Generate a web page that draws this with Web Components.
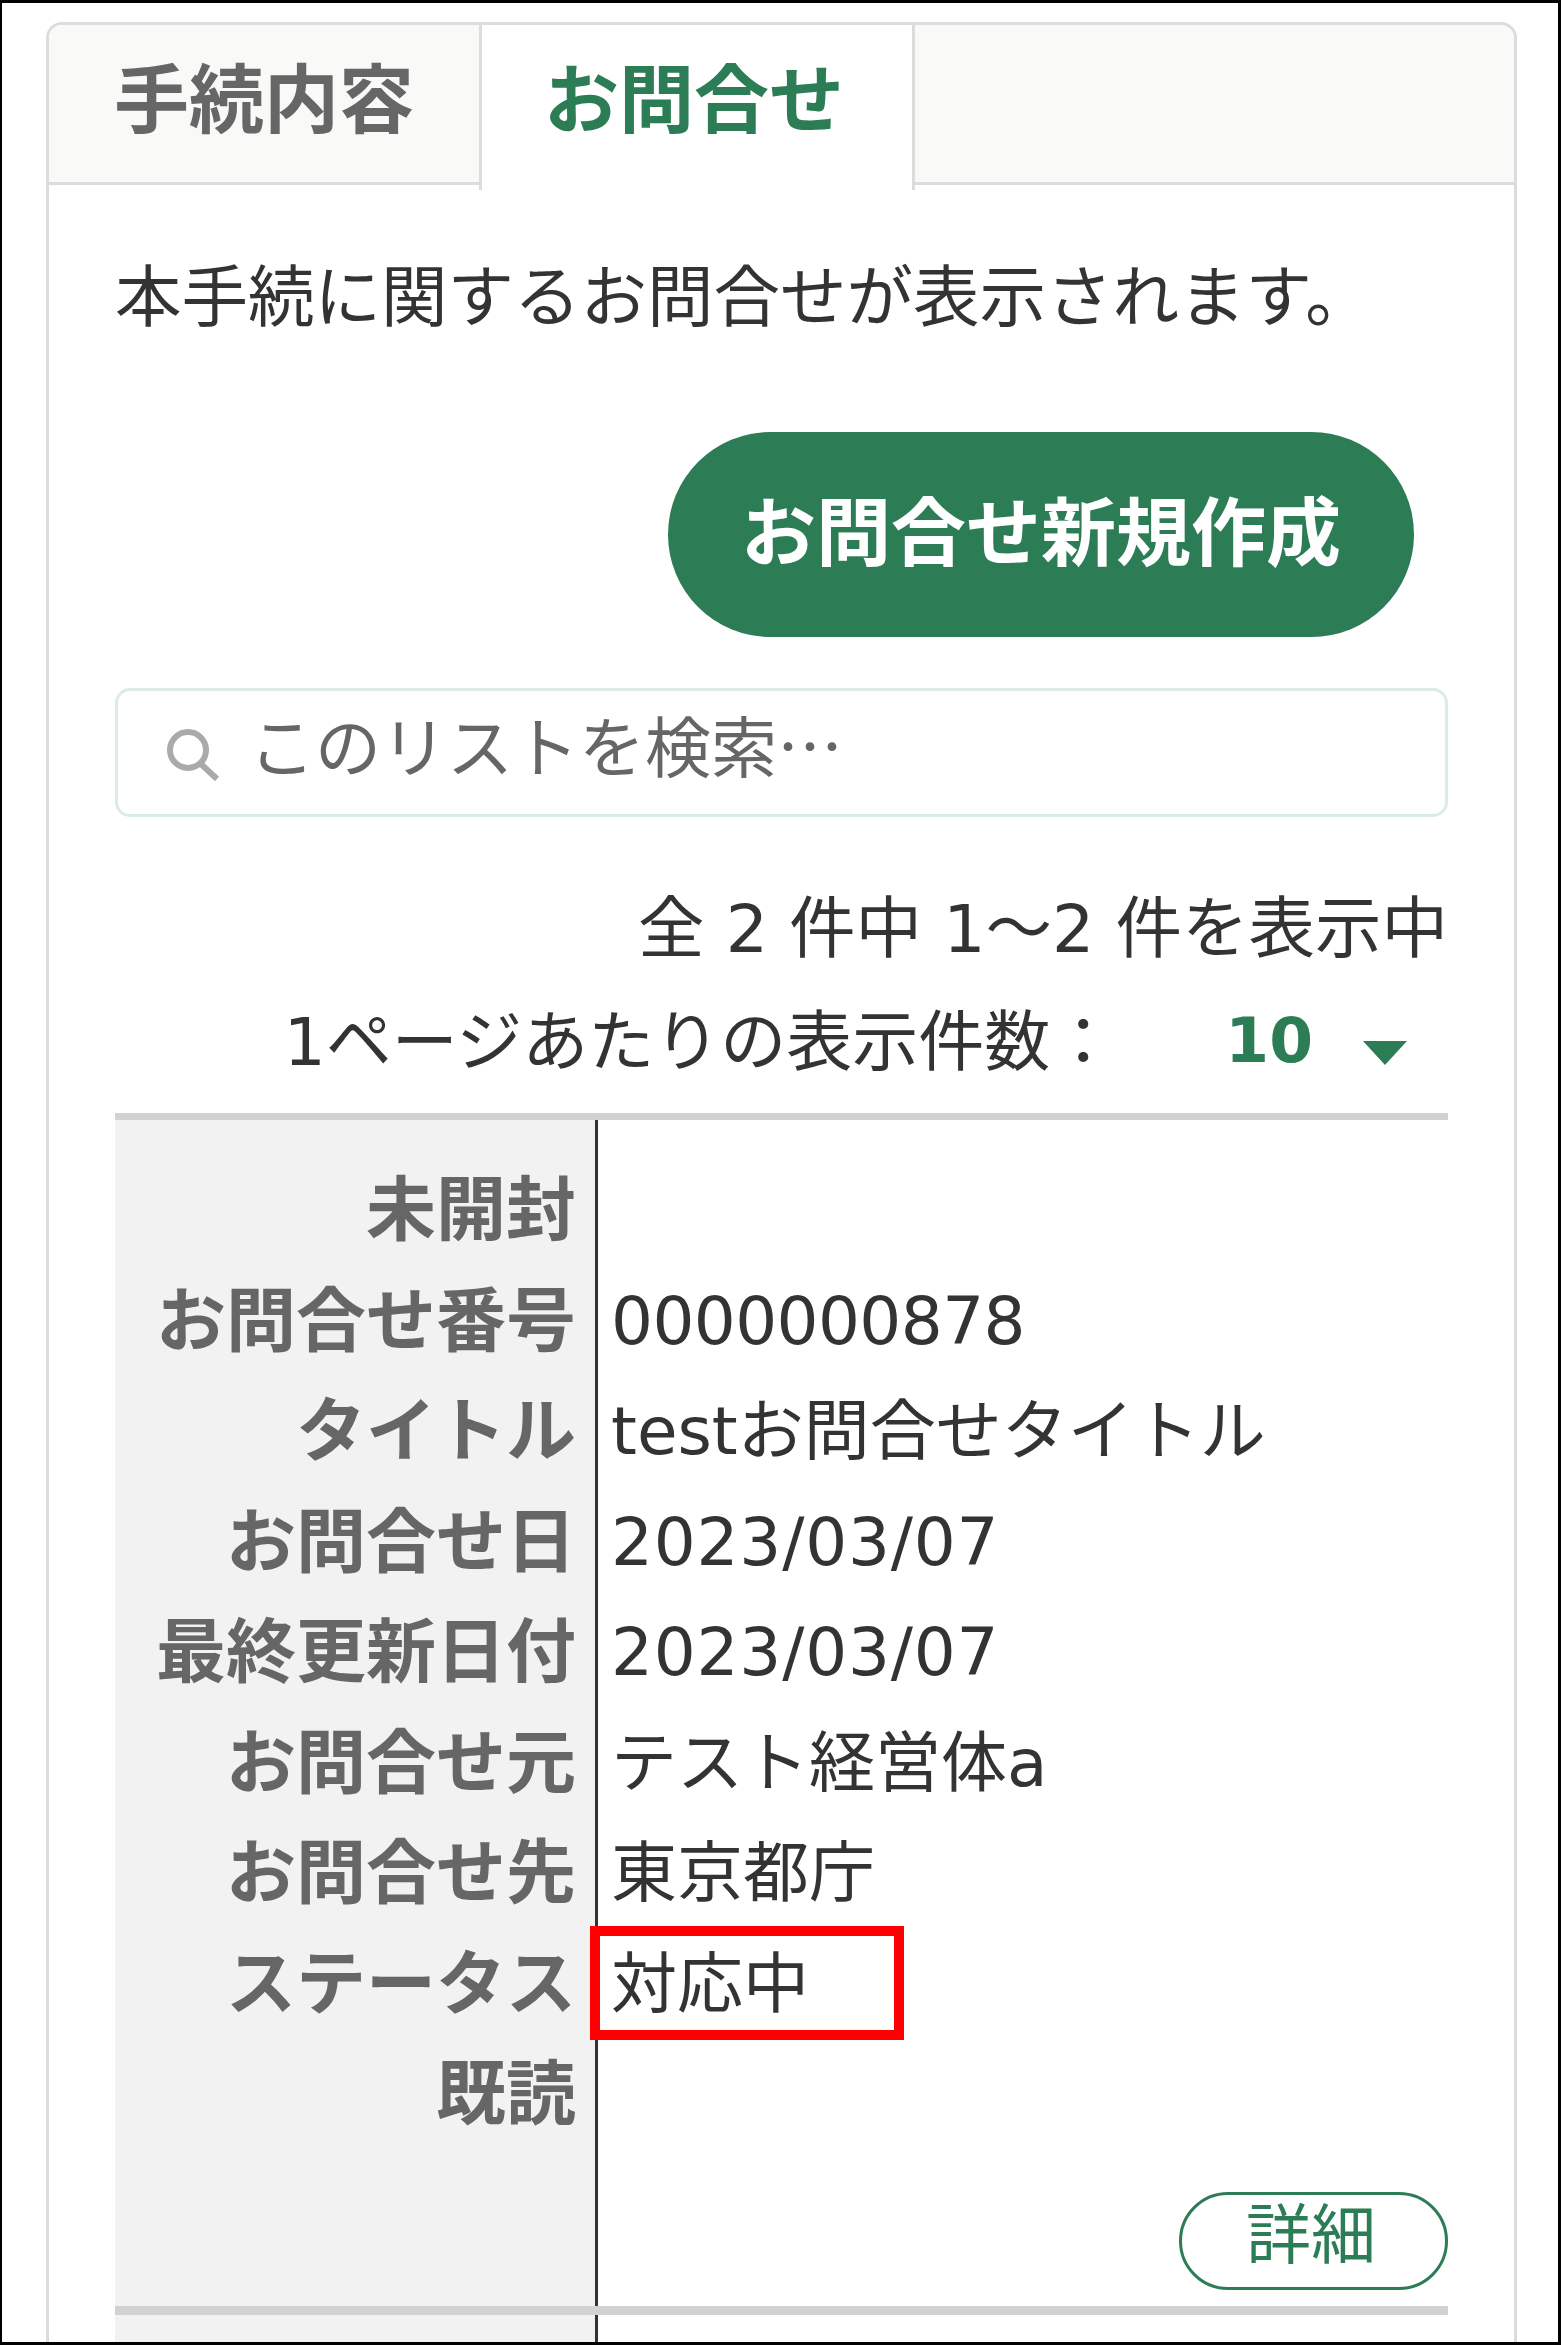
<!DOCTYPE html>
<html lang="ja">
<head>
<meta charset="utf-8">
<title>お問合せ</title>
<style>
  html, body { margin: 0; padding: 0; background: #fff; }
  body { font-family: "DejaVu Sans", "Noto Sans CJK JP", sans-serif; color: #333; }
  .num { letter-spacing: -0.6px; }
  .date { letter-spacing: 0.8px; }
</style>
</head>
<body>
<inquiry-frame>
  <tab-card>
    <tab-item slot="tabs">手続内容</tab-item>
    <tab-item slot="tabs" active>お問合せ</tab-item>

    <p-text>本手続に関するお問合せが表示されます。</p-text>
    <primary-button>お問合せ新規作成</primary-button>
    <search-box>このリストを検索…</search-box>
    <list-pager total="全 2 件中 1～2 件を表示中" label="1ページあたりの表示件数：" size="10"></list-pager>

    <inquiry-record>
      <record-field label="未開封"></record-field>
      <record-field label="お問合せ番号"><span class="num">0000000878</span></record-field>
      <record-field label="タイトル">testお問合せタイトル</record-field>
      <record-field label="お問合せ日"><span class="date">2023/03/07</span></record-field>
      <record-field label="最終更新日付"><span class="date">2023/03/07</span></record-field>
      <record-field label="お問合せ元">テスト経営体a</record-field>
      <record-field label="お問合せ先">東京都庁</record-field>
      <record-field label="ステータス" marked>対応中</record-field>
      <record-field label="既読"></record-field>
      <outline-button slot="actions">詳細</outline-button>
    </inquiry-record>
    <inquiry-record last></inquiry-record>
  </tab-card>
</inquiry-frame>

<script>
const GREEN = '#2c7d55'
const LINE = '#dcdcdc'
const CJK = '"Noto Sans CJK JP", sans-serif'

class InquiryFrame extends HTMLElement {
  constructor() {
    super()
    this.attachShadow({ mode: 'open' }).innerHTML = `
      <style>
        :host {
          display: block;
          box-sizing: border-box;
          width: 1561px;
          height: 2345px;
          padding: 19px 0 0 44px;
          border: solid #000;
          border-width: 3px 3px 3px 2px;
          overflow: hidden;
          background: #fff;
        }
      </style>
      <slot></slot>`
  }
}

class TabCard extends HTMLElement {
  constructor() {
    super()
    this.attachShadow({ mode: 'open' }).innerHTML = `
      <style>
        :host {
          display: block;
          width: 1471px;
          box-sizing: border-box;
          border: 3px solid ${LINE};
          border-bottom: 0;
          border-radius: 16px 16px 0 0;
        }
        .tabs {
          display: flex;
          height: 157px;
          background: #f9f9f7;
          border-bottom: 3px solid ${LINE};
          border-radius: 13px 13px 0 0;
        }
        .panel { padding: 57px 66px 0; }
      </style>
      <div class="tabs"><slot name="tabs"></slot></div>
      <div class="panel"><slot></slot></div>`
  }
}

class TabItem extends HTMLElement {
  constructor() {
    super()
    this.attachShadow({ mode: 'open' }).innerHTML = `
      <style>
        :host {
          display: flex;
          align-items: center;
          justify-content: center;
          box-sizing: border-box;
          width: 430px;
          height: 157px;
          padding-bottom: 18px;
          font: 700 75px/1 ${CJK};
          color: #666;
        }
        :host([active]) {
          width: 436px;
          height: 165px;
          padding: 0 6px 26px 0;
          color: ${GREEN};
          background: #fff;
          border: solid ${LINE};
          border-width: 0 3px;
        }
      </style>
      <slot></slot>`
  }
}

class PText extends HTMLElement {
  constructor() {
    super()
    this.attachShadow({ mode: 'open' }).innerHTML = `
      <style>
        :host { display: block; font: 400 66.5px/100px ${CJK}; color: #333; white-space: nowrap; }
      </style>
      <slot></slot>`
  }
}

class PrimaryButton extends HTMLElement {
  constructor() {
    super()
    this.attachShadow({ mode: 'open' }).innerHTML = `
      <style>
        :host {
          display: flex;
          align-items: center;
          justify-content: center;
          box-sizing: border-box;
          width: 746px;
          height: 205px;
          margin: 90px 34px 0 auto;
          padding-bottom: 14px;
          border-radius: 103px;
          background: ${GREEN};
          color: #fff;
          font: 700 75px/1 ${CJK};
        }
      </style>
      <slot></slot>`
  }
}

class SearchBox extends HTMLElement {
  constructor() {
    super()
    this.attachShadow({ mode: 'open' }).innerHTML = `
      <style>
        :host {
          display: flex;
          align-items: center;
          gap: 29px;
          box-sizing: border-box;
          height: 129px;
          margin-top: 51px;
          padding: 0 48px;
          border: 3px solid #dcebe5;
          border-radius: 15px;
          font: 400 66px/1 ${CJK};
          color: #666;
        }
        svg { flex: none; margin-top: 4px; }
        span { margin-top: -19px; }
      </style>
      <svg width="54" height="52" viewBox="0 0 54 52" fill="none" stroke="#aaa">
        <circle cx="22" cy="21" r="18" stroke-width="6"/>
        <path d="M35 35 L51 50" stroke-width="6"/>
      </svg>
      <span><slot></slot></span>`
  }
}

class ListPager extends HTMLElement {
  constructor() {
    super()
    this.attachShadow({ mode: 'open' })
  }

  connectedCallback() {
    const total = this.getAttribute('total')
    const label = this.getAttribute('label')
    const size = this.getAttribute('size')
    this.shadowRoot.innerHTML = `
      <style>
        :host { display: block; margin-top: 62px; font-size: 66px; line-height: 100px; color: #333; }
        .total { text-align: right; white-space: nowrap; font-size: 66.5px; }
        .size { display: flex; align-items: center; justify-content: flex-end; margin-top: 14px; padding-right: 41px; white-space: nowrap; }
        .value { margin: -4px 0 0 109px; font-size: 63px; font-weight: 700; color: ${GREEN}; }
        .caret {
          width: 0; height: 0;
          margin: 20px 0 0 50px;
          border-left: 22px solid transparent;
          border-right: 22px solid transparent;
          border-top: 24px solid ${GREEN};
        }
      </style>
      <div class="total">${total}</div>
      <div class="size">
        <span>${label}</span>
        <span class="value">${size}</span>
        <span class="caret"></span>
      </div>`
  }
}

class InquiryRecord extends HTMLElement {
  constructor() {
    super()
    this.attachShadow({ mode: 'open' }).innerHTML = `
      <style>
        :host {
          display: block;
          margin-top: 20px;
          padding-top: 35px;
          border-top: 7px solid #d2d2d2;
          background: linear-gradient(to right, #f2f2f2 480px, #333 480px, #333 483px, #fff 483px);
        }
        :host([last]) { margin-top: 0; height: 120px; border-top-width: 9px; }
        .actions { display: flex; justify-content: flex-end; padding: 42px 0 16px; }
      </style>
      <slot></slot>
      <div class="actions"><slot name="actions"></slot></div>`
  }
}

class RecordField extends HTMLElement {
  constructor() {
    super()
    this.attachShadow({ mode: 'open' })
  }

  connectedCallback() {
    const box = this.hasAttribute('marked') ? '<i class="mark"></i>' : ''
    this.shadowRoot.innerHTML = `
      <style>
        :host {
          display: grid;
          grid-template-columns: 483px 1fr;
          height: 110.5px;
          align-items: center;
          position: relative;
          white-space: nowrap;
        }
        .label { padding: 0 22px 10px 0; text-align: right; font: 700 70px/1 ${CJK}; color: #666; }
        .value { padding: 2px 0 0 13px; font-size: 66px; line-height: 1; color: #333; }
        .mark {
          position: absolute;
          left: 475px;
          top: -3px;
          width: 314px;
          height: 114px;
          box-sizing: border-box;
          border: 10px solid #f00;
        }
      </style>
      <div class="label">${this.getAttribute('label')}</div>
      <div class="value"><slot></slot></div>
      ${box}`
  }
}

class OutlineButton extends HTMLElement {
  constructor() {
    super()
    this.attachShadow({ mode: 'open' }).innerHTML = `
      <style>
        :host {
          display: flex;
          align-items: center;
          justify-content: center;
          box-sizing: border-box;
          width: 269px;
          height: 98px;
          padding: 0 5px 20px 0;
          border: 3px solid ${GREEN};
          border-radius: 49px;
          color: ${GREEN};
          font: 400 65px/1 ${CJK};
          background: #fff;
        }
      </style>
      <slot></slot>`
  }
}

customElements.define('inquiry-frame', InquiryFrame)
customElements.define('tab-card', TabCard)
customElements.define('tab-item', TabItem)
customElements.define('p-text', PText)
customElements.define('primary-button', PrimaryButton)
customElements.define('search-box', SearchBox)
customElements.define('list-pager', ListPager)
customElements.define('inquiry-record', InquiryRecord)
customElements.define('record-field', RecordField)
customElements.define('outline-button', OutlineButton)
</script>
</body>
</html>
